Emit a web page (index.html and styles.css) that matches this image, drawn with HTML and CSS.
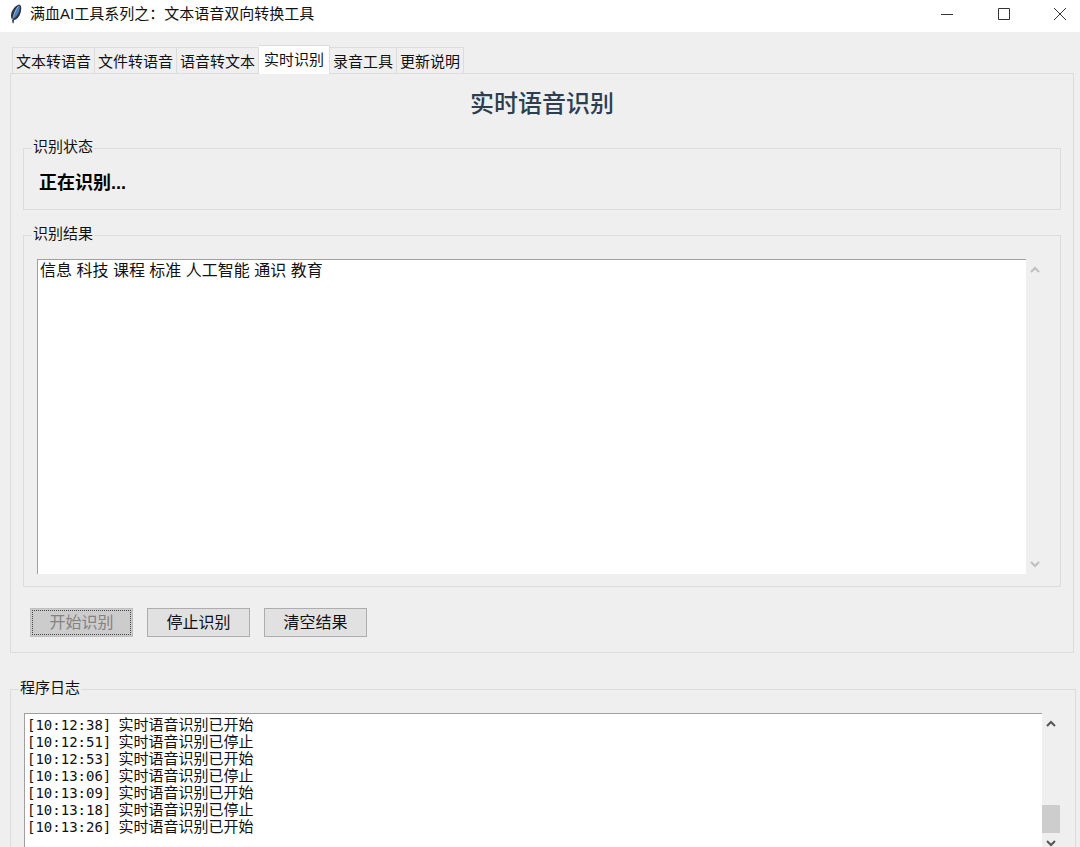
FILE: index.html
```html
<!DOCTYPE html>
<html lang="zh-CN">
<head>
<meta charset="utf-8">
<title>满血AI工具系列之：文本语音双向转换工具</title>
<link rel="stylesheet" href="styles.css">
</head>
<body>
<div class="window">
  <header class="titlebar">
    <svg class="feather" width="14" height="20" viewBox="0 0 14 20" aria-hidden="true">
      <path d="M10 0.500C13 1 12.500 6 11.500 9C10.500 12.500 8 15.500 5 16L4.500 19.500L3.500 19L3 15.500C0.500 12 2.500 3.500 10 0.500Z" fill="#2b3542"/>
      <path d="M10.500 1.500C11.500 5 9.500 11 5 14.500C4 10 6 4.500 10.500 1.500Z" fill="#4d80bd"/>
      <path d="M9.500 2C7 5 4.500 10.500 3.500 16" fill="none" stroke="#a9c4de" stroke-width="0.800"/>
    </svg>
    <h1 class="title">满血AI工具系列之：文本语音双向转换工具</h1>
    <div class="controls">
      <button class="control" type="button" aria-label="最小化"><svg width="14" height="14" viewBox="0 0 14 14"><path d="M1 7.500H13"/></svg></button>
      <button class="control" type="button" aria-label="最大化"><svg width="14" height="14" viewBox="0 0 14 14"><path d="M1.500 1.500H12.500V12.500H1.500Z"/></svg></button>
      <button class="control" type="button" aria-label="关闭"><svg width="14" height="14" viewBox="0 0 14 14"><path d="M1 1L13 13M13 1L1 13"/></svg></button>
    </div>
  </header>

  <main class="content">
    <section class="notebook">
      <nav class="tabs" role="tablist">
        <button class="tab" type="button" role="tab">文本转语音</button>
        <button class="tab" type="button" role="tab">文件转语音</button>
        <button class="tab" type="button" role="tab">语音转文本</button>
        <button class="tab tab-active" type="button" role="tab" aria-selected="true">实时识别</button>
        <button class="tab" type="button" role="tab">录音工具</button>
        <button class="tab" type="button" role="tab">更新说明</button>
      </nav>
      <div class="pane" role="tabpanel">
        <h2 class="heading">实时语音识别</h2>
        <section class="group">
          <h3 class="legend">识别状态</h3>
          <p class="status">正在识别...</p>
        </section>
        <section class="group group-result">
          <h3 class="legend"><label for="result">识别结果</label></h3>
          <div class="scrolled">
            <textarea class="field result" id="result" spellcheck="false">信息 科技 课程 标准 人工智能 通识 教育</textarea>
            <div class="scrollbar scrollbar-off">
              <svg width="10" height="8" viewBox="0 0 10 8"><path d="M1 6L5 2L9 6"/></svg>
              <svg width="10" height="8" viewBox="0 0 10 8"><path d="M1 2L5 6L9 2"/></svg>
            </div>
          </div>
        </section>
        <div class="actions">
          <button class="action" type="button" disabled>开始识别</button>
          <button class="action" type="button">停止识别</button>
          <button class="action" type="button">清空结果</button>
        </div>
      </div>
    </section>

    <section class="group group-log">
      <h3 class="legend">程序日志</h3>
      <div class="scrolled">
        <ol class="field log">
          <li><time>[10:12:38]</time> 实时语音识别已开始</li>
          <li><time>[10:12:51]</time> 实时语音识别已停止</li>
          <li><time>[10:12:53]</time> 实时语音识别已开始</li>
          <li><time>[10:13:06]</time> 实时语音识别已停止</li>
          <li><time>[10:13:09]</time> 实时语音识别已开始</li>
          <li><time>[10:13:18]</time> 实时语音识别已停止</li>
          <li><time>[10:13:26]</time> 实时语音识别已开始</li>
        </ol>
        <div class="scrollbar">
          <svg width="10" height="8" viewBox="0 0 10 8"><path d="M1 6L5 2L9 6"/></svg>
          <div class="thumb"></div>
          <svg width="10" height="8" viewBox="0 0 10 8"><path d="M1 2L5 6L9 2"/></svg>
        </div>
      </div>
    </section>
  </main>
</div>
</body>
</html>
```
FILE: styles.css
```css
* {
  box-sizing: border-box;
}

body {
  margin: 0;
  background: #efefef;
  color: #111;
  font-family: "Liberation Sans", "Noto Sans CJK SC", sans-serif;
  font-size: 15px;
  line-height: 20px;
}

h1, h2, h3, p, ol {
  margin: 0;
  padding: 0;
  font-weight: 400;
}

button, textarea {
  font: inherit;
  color: inherit;
}

.window {
  display: flex;
  flex-direction: column;
  height: 100vh;
  overflow: hidden;
}

.titlebar {
  display: flex;
  align-items: center;
  height: 32px;
  padding: 0 0 5px 9px;
  background: #fff;
}

.feather {
  margin-right: 7px;
}

.title {
  flex: 1;
  font-size: 15px;
}

.controls {
  display: flex;
}

.control {
  display: flex;
  align-items: center;
  justify-content: center;
  width: 57px;
  height: 26px;
  padding: 0;
  border: 0;
  background: none;
}

.control:last-child {
  justify-content: flex-end;
  width: 48px;
  padding-right: 13px;
}

.control path {
  fill: none;
  stroke: #333;
}

.content {
  display: flex;
  flex: 1;
  flex-direction: column;
  gap: 26px;
  min-height: 0;
  padding: 13px 4px 0 10px;
}

.notebook {
  display: flex;
  flex: 1;
  flex-direction: column;
  min-height: 0;
  margin-right: 2px;
}

.tabs {
  display: flex;
  align-items: flex-end;
  padding-left: 2px;
}

.tab {
  height: 26px;
  padding: 2px 3px 0;
  border: 1px solid #dcdcdc;
  border-left-width: 0;
  border-bottom: 0;
  background: #efefef;
  line-height: 20px;
}

.tab:first-child {
  border-left-width: 1px;
}

.tab-active {
  z-index: 1;
  height: 29px;
  margin-bottom: -1px;
  padding: 0 5px;
  background: #fff;
}

.pane {
  display: flex;
  flex: 1;
  flex-direction: column;
  min-height: 0;
  padding: 12px 12px 15px;
  border: 1px solid #dcdcdc;
}

.heading {
  margin-bottom: 16px;
  color: #2c3e50;
  font-size: 24px;
  font-weight: 500;
  line-height: 36px;
  text-align: center;
}

.group {
  display: flex;
  flex-direction: column;
  margin-top: 10px;
  border: 1px solid #dcdcdc;
}

.legend {
  align-self: flex-start;
  margin: -12px 0 0 8px;
  padding: 0 1px;
  background: #efefef;
  font-size: 15px;
  line-height: 20px;
}

.status {
  padding: 14px 15px;
  color: #000;
  font-size: 18px;
  font-weight: 700;
  line-height: 24px;
}

.group-result {
  flex: 1;
  min-height: 0;
  margin-top: 25px;
  padding: 0 13px 12px;
}

.group-result .legend,
.group-log .legend {
  margin-left: -5px;
}

.scrolled {
  display: flex;
  flex: 1;
  min-height: 0;
  margin-top: 15px;
}

.field {
  flex: 1;
  min-width: 0;
  border: 0;
  border-top: 1px solid #a0a0a0;
  border-left: 1px solid #a0a0a0;
  background: #fff;
}

.result {
  padding: 1px 2px;
  outline: 0;
  resize: none;
  overflow: hidden;
  font-size: 16px;
  line-height: 20px;
}

.scrollbar {
  display: flex;
  flex-direction: column;
  align-items: center;
  width: 18px;
  padding: 7px 0 0;
  background: #efefef;
}

.scrollbar path {
  fill: none;
  stroke: #555;
  stroke-width: 2;
}

.scrollbar-off {
  justify-content: space-between;
  margin-right: 3px;
  padding-bottom: 6px;
}

.scrollbar-off path {
  stroke: #bfbfbf;
}

.thumb {
  width: 100%;
  height: 28px;
  margin: auto 0 6px;
  background: #cdcdcd;
}

.actions {
  display: flex;
  gap: 14px;
  margin-top: 21px;
  padding-left: 7px;
}

.action {
  width: 103px;
  height: 29px;
  padding: 0;
  border: 1px solid #adadad;
  background: #e1e1e1;
  font-size: 16px;
  line-height: 20px;
}

.action:disabled {
  border-color: #bfbfbf;
  outline: 1px dotted #444;
  outline-offset: -3px;
  background: #cccccc;
  color: #838383;
}

.group-log {
  height: 158px;
  padding: 0 15px 0 13px;
  border-bottom: 0;
}

.log {
  padding: 2px;
  overflow: hidden;
  list-style: none;
  line-height: 17px;
}

.log li {
  height: 17px;
  white-space: nowrap;
}

.log time {
  font-family: "DejaVu Sans Mono", monospace;
  font-size: 14px;
  margin-right: 3px;
}
```
